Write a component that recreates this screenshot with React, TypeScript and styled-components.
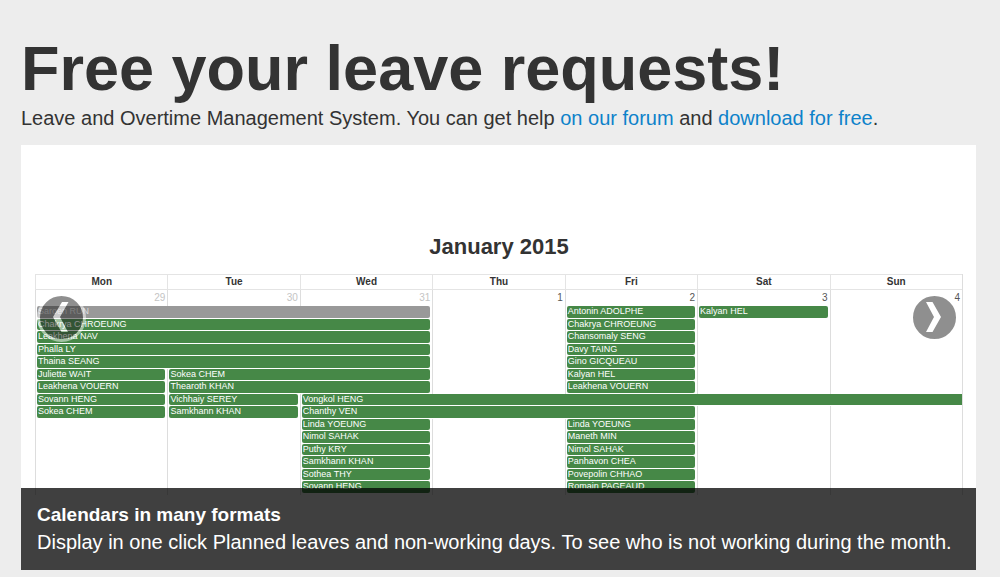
import React from "react";
import styled, { createGlobalStyle } from "styled-components";

const GlobalStyle = createGlobalStyle`
  * { box-sizing: border-box; }
  body {
    margin: 0;
    background: #ededed;
    color: #333;
    font-family: "Liberation Sans", Arial, sans-serif;
  }
`;

const Page = styled.main`
  padding: 32px 24px 7px 21px;
`;

const Title = styled.h1`
  margin: 0;
  font-size: 63px;
  line-height: 72px;
`;

const Lead = styled.p`
  margin: 0 0 13px;
  font-size: 20px;
  line-height: 28px;
`;

const Link = styled.a`
  color: #0d82ca;
  text-decoration: none;
`;

const Carousel = styled.section`
  position: relative;
  padding: 88px 13px 75px 14px;
  background: #fff;
`;

const Month = styled.h2`
  margin: 0;
  padding-bottom: 13px;
  font-size: 22px;
  line-height: 28px;
  text-align: center;
`;

const Calendar = styled.table`
  width: 100%;
  table-layout: fixed;
  border-collapse: separate;
  border-spacing: 0;
  border-right: 1px solid #ddd;
`;

const DayHead = styled.th`
  height: 16px;
  padding: 0;
  border: solid #e4e4e4;
  border-width: 1px 0 1px 1px;
  font-size: 10px;
  line-height: 14px;
`;

const DayNumber = styled.td<{ $muted?: boolean }>`
  height: 16px;
  padding: 0 2px;
  border-left: 1px solid #ddd;
  font-size: 10px;
  line-height: 16px;
  text-align: right;
  vertical-align: top;
  color: ${(p) => (p.$muted ? "#c4c4c4" : "#555")};
`;

const EventRow = styled.tr`
  height: 12px;
  &:nth-child(odd) { height: 13px; }
  &:last-child { height: 14px; }
`;

const Slot = styled.td<{ $open?: boolean }>`
  height: inherit;
  padding: 0 ${(p) => (p.$open ? 0 : 2)}px 1px 1px;
  border-left: 1px solid #ddd;
  font-size: 9px;
  line-height: 11px;
  vertical-align: top;
`;

const Bar = styled.div<{ $grey?: boolean; $open?: boolean }>`
  height: 11px;
  padding-left: 1px;
  overflow: hidden;
  border-radius: ${(p) => (p.$open ? "2px 0 0 2px" : "2px")};
  background: ${(p) => (p.$grey ? "#999" : "#468847")};
  color: ${(p) => (p.$grey ? "#ddd" : "#fff")};
  white-space: nowrap;

  ${EventRow}:nth-child(odd) & { height: 12px; }
`;

const Control = styled.button<{ $side: "left" | "right" }>`
  position: absolute;
  top: 148px;
  ${(p) => p.$side}: ${(p) => (p.$side === "left" ? 16 : 17)}px;
  width: 49px;
  height: 49px;
  padding: 0;
  border: 3px solid #fff;
  border-radius: 50%;
  background: #222;
  opacity: 0.5;
  cursor: pointer;

  svg { display: block; }
`;

const Caption = styled.div`
  position: absolute;
  right: 0;
  bottom: 0;
  left: 0;
  padding: 14px 16px;
  background: rgba(0, 0, 0, 0.75);
  color: #fff;
`;

const CaptionTitle = styled.h3`
  margin: 0;
  font-size: 19px;
  line-height: 26px;
`;

const CaptionText = styled.p`
  margin: 0;
  font-size: 20px;
  line-height: 28px;
`;

type Event = { day: number; span: number; name: string; grey?: boolean };

const ev = (day: number, name: string, span = 1, grey = false): Event => ({ day, span, name, grey });

const weekdays = ["Mon", "Tue", "Wed", "Thu", "Fri", "Sat", "Sun"];
const dates = [29, 30, 31, 1, 2, 3, 4];

const rows: Event[][] = [
  [ev(0, "Saroen RUN", 3, true), ev(4, "Antonin ADOLPHE"), ev(5, "Kalyan HEL")],
  [ev(0, "Chakrya CHROEUNG", 3), ev(4, "Chakrya CHROEUNG")],
  [ev(0, "Leakhena NAV", 3), ev(4, "Chansomaly SENG")],
  [ev(0, "Phalla LY", 3), ev(4, "Davy TAING")],
  [ev(0, "Thaina SEANG", 3), ev(4, "Gino GICQUEAU")],
  [ev(0, "Juliette WAIT"), ev(1, "Sokea CHEM", 2), ev(4, "Kalyan HEL")],
  [ev(0, "Leakhena VOUERN"), ev(1, "Thearoth KHAN", 2), ev(4, "Leakhena VOUERN")],
  [ev(0, "Sovann HENG"), ev(1, "Vichhaiy SEREY"), ev(2, "Vongkol HENG", 5)],
  [ev(0, "Sokea CHEM"), ev(1, "Samkhann KHAN"), ev(2, "Chanthy VEN", 3)],
  [ev(2, "Linda YOEUNG"), ev(4, "Linda YOEUNG")],
  [ev(2, "Nimol SAHAK"), ev(4, "Maneth MIN")],
  [ev(2, "Puthy KRY"), ev(4, "Nimol SAHAK")],
  [ev(2, "Samkhann KHAN"), ev(4, "Panhavon CHEA")],
  [ev(2, "Sothea THY"), ev(4, "Povepolin CHHAO")],
  [ev(2, "Sovann HENG"), ev(4, "Romain PAGEAUD")],
];

function Week({ events }: { events: Event[] }) {
  const cells: React.ReactNode[] = [];
  for (let day = 0; day < 7; ) {
    const event = events.find((e) => e.day === day);
    const span = event ? event.span : 1;
    const open = !!event && span > 1 && day + span === 7;
    cells.push(
      <Slot key={day} colSpan={span} $open={open}>
        {event && <Bar $grey={event.grey} $open={open}>{event.name}</Bar>}
      </Slot>
    );
    day += span;
  }
  return <EventRow>{cells}</EventRow>;
}

export default function App() {
  return (
    <>
      <GlobalStyle />
      <Page>
        <Title>Free your leave requests!</Title>
        <Lead>
          Leave and Overtime Management System. You can get help <Link href="#forum">on our forum</Link> and{" "}
          <Link href="#download">download for free</Link>.
        </Lead>
        <Carousel>
          <Month>January 2015</Month>
          <Calendar>
            <thead>
              <tr>
                {weekdays.map((d) => (
                  <DayHead key={d} scope="col">{d}</DayHead>
                ))}
              </tr>
              <tr>
                {dates.map((d) => (
                  <DayNumber key={d} $muted={d > 28}>{d}</DayNumber>
                ))}
              </tr>
            </thead>
            <tbody>
              {rows.map((events, i) => (
                <Week key={i} events={events} />
              ))}
            </tbody>
          </Calendar>
          <Control $side="left" aria-label="Previous slide">
            <svg width="43" height="43" viewBox="0 0 43 43" fill="#fff">
              <path d="M22 6H28.500L20 21L28 36H21.500L13 21Z" />
            </svg>
          </Control>
          <Control $side="right" aria-label="Next slide">
            <svg width="43" height="43" viewBox="0 0 43 43" fill="#fff">
              <path d="M19.500 6H13L21 21L13 36H19.500L28 21Z" />
            </svg>
          </Control>
          <Caption>
            <CaptionTitle>Calendars in many formats</CaptionTitle>
            <CaptionText>
              Display in one click Planned leaves and non-working days. To see who is not working during the month.
            </CaptionText>
          </Caption>
        </Carousel>
      </Page>
    </>
  );
}
